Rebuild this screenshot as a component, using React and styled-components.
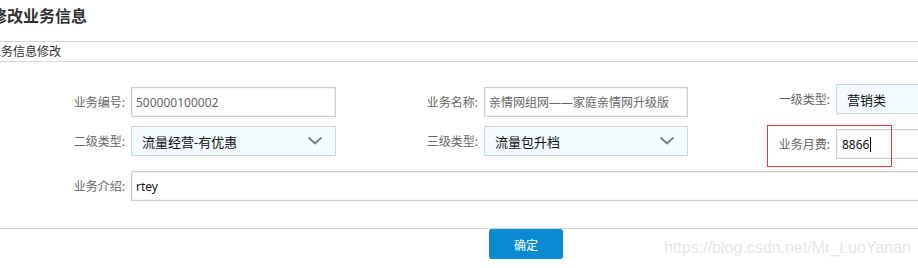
import React from "react";
import styled, { createGlobalStyle } from "styled-components";

const Global = createGlobalStyle`
  html, body {
    margin: 0;
    padding: 0;
    background: #fff;
    overflow: hidden;
  }
  body {
    font-family: "Noto Sans", "Noto Sans CJK SC", sans-serif;
    color: #333;
  }
`;

const Page = styled.div`
  width: 918px;
  height: 268px;
  overflow: hidden;
`;

const Title = styled.h2`
  margin: 0;
  height: 41px;
  line-height: 32px;
  font-size: 16px;
  font-weight: 700;
  color: #333;
  text-indent: -9px;
  border-bottom: 1px solid #d6d6d6;
  white-space: nowrap;
`;

const SubTitle = styled.div`
  height: 19px;
  line-height: 19px;
  font-size: 12px;
  color: #333;
  text-indent: -11px;
  border-bottom: 1px solid #d6d6d6;
  white-space: nowrap;
`;

const Form = styled.div`
  display: grid;
  grid-template-columns: 353px 352px 1fr;
  row-gap: 9px;
  padding: 25px 0 27px;
  border-bottom: 1px solid #d6d6d6;
`;

const Field = styled.div`
  position: relative;
  display: flex;
  align-items: center;
  height: 30px;
  margin-top: ${(p) => p.$shift || 0}px;
  grid-column: ${(p) => (p.$full ? "1 / -1" : "auto")};
`;

const Label = styled.label`
  flex: none;
  width: 131px;
  padding-right: 6px;
  box-sizing: border-box;
  text-align: right;
  font-size: 12px;
  color: #666;
  white-space: nowrap;
`;

const InputBox = styled.div`
  flex: none;
  box-sizing: border-box;
  width: ${(p) => p.$w}px;
  height: 30px;
  padding-left: ${(p) => p.$pad || 4}px;
  display: flex;
  align-items: center;
  border: 1px solid #cdd1d4;
  box-shadow: inset 0 0 0 1px #f0f0f0;
  background: #fff;
  font-size: 12px;
  color: ${(p) => (p.$dark ? "#111" : "#666")};
  white-space: nowrap;
`;

const SelectBox = styled.div`
  flex: none;
  box-sizing: border-box;
  width: ${(p) => p.$w}px;
  height: 30px;
  padding: 0 13px 0 10px;
  display: flex;
  align-items: center;
  justify-content: space-between;
  border: 1px solid #cdd6dc;
  background: #f3fbfe;
  font-size: 13px;
  color: #111;
  white-space: nowrap;
`;

const Caret = styled.span`
  display: inline-block;
  width: 1px;
  height: 15px;
  margin-left: 1px;
  background: #000;
`;

const RedMark = styled.div`
  position: absolute;
  left: 62px;
  top: -4px;
  width: 125px;
  height: 42px;
  box-sizing: border-box;
  border: 1px solid #e23a3a;
  pointer-events: none;
`;

const Actions = styled.div`
  display: flex;
  align-items: flex-start;
`;

const SubmitButton = styled.button`
  margin-left: 489px;
  width: 74px;
  height: 30px;
  border: none;
  border-radius: 3px;
  background: #0a8bd1;
  color: #fff;
  font-family: "Noto Sans CJK SC", sans-serif;
  font-size: 12px;
  padding: 0;
  cursor: pointer;
`;

const Watermark = styled.span`
  margin-left: 101px;
  margin-top: 11px;
  font-family: "Liberation Sans", Arial, sans-serif;
  font-size: 16px;
  line-height: 16px;
  color: #e6e6e6;
  white-space: nowrap;
`;

const Chevron = () => (
  <svg width="14" height="8" viewBox="0 0 14 8" aria-hidden="true">
    <polyline
      points="1,1 7,6.5 13,1"
      fill="none"
      stroke="#6f8090"
      strokeWidth="1.8"
      strokeLinecap="round"
      strokeLinejoin="round"
    />
  </svg>
);

export default function App() {
  return (
    <>
      <Global />
      <Page>
        <Title>修改业务信息</Title>
        <SubTitle>业务信息修改</SubTitle>
        <Form>
          <Field>
            <Label>业务编号:</Label>
            <InputBox $w={205}>500000100002</InputBox>
          </Field>
          <Field>
            <Label>业务名称:</Label>
            <InputBox $w={204}>亲情网组网——家庭亲情网升级版</InputBox>
          </Field>
          <Field $shift={-3}>
            <Label>一级类型:</Label>
            <SelectBox $w={205}>
              营销类
              <Chevron />
            </SelectBox>
          </Field>

          <Field>
            <Label>二级类型:</Label>
            <SelectBox $w={205}>
              流量经营-有优惠
              <Chevron />
            </SelectBox>
          </Field>
          <Field>
            <Label>三级类型:</Label>
            <SelectBox $w={204}>
              流量包升档
              <Chevron />
            </SelectBox>
          </Field>
          <Field $shift={3}>
            <Label>业务月费:</Label>
            <InputBox $w={205} $pad={5} $dark>
              8866
              <Caret />
            </InputBox>
            <RedMark />
          </Field>

          <Field $full $shift={3}>
            <Label>业务介绍:</Label>
            <InputBox $w={910} $dark>rtey</InputBox>
          </Field>
        </Form>
        <Actions>
          <SubmitButton type="button">确定</SubmitButton>
          <Watermark>https://blog.csdn.net/Mr_LuoYanan</Watermark>
        </Actions>
      </Page>
    </>
  );
}
